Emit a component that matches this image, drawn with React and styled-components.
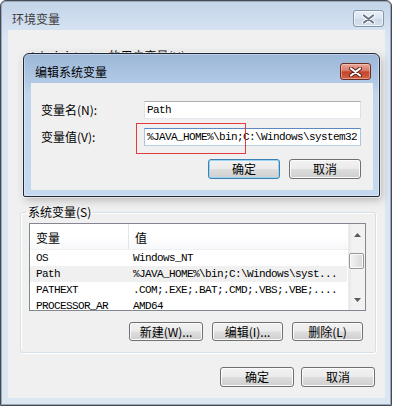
import React from 'react';
import styled, { createGlobalStyle } from 'styled-components';

const UI = `"Noto Sans CJK SC", "Noto Sans", sans-serif`;
const MONO = `"Liberation Mono", "Noto Sans CJK SC", monospace`;

const GlobalStyle = createGlobalStyle`
  html, body { margin: 0; padding: 0; background: #ffffff; }
  body { font-family: ${UI}; font-size: 12px; color: #000; }
  * { box-sizing: border-box; }
`;

const Window = styled.div`
  position: relative;
  width: 392px;
  height: 406px;
  border: 1px solid #434a54;
  border-radius: 6px 6px 0 0;
  box-shadow: inset 0 0 0 1px #9aa8b9;
  background: linear-gradient(180deg, #c3d4e8 0, #d5e2f1 29px, #dbe6f3 40px, #dbe6f3 100%);
  padding: 0 6px 7px 7px;
  display: flex;
  flex-direction: column;
`;

const TitleBar = styled.div`
  height: ${p => p.$h || 29}px;
  flex: none;
  display: flex;
  align-items: center;
  justify-content: space-between;
  padding: 6px ${p => p.$right}px 0 4px;
`;

const Title = styled.span`
  font-size: 12px;
  line-height: 14px;
  color: ${p => (p.$active ? '#000' : '#3c3c3c')};
`;

const CloseButton = styled.div`
  width: 31px;
  height: 17px;
  border-radius: 3px;
  display: flex;
  align-items: center;
  justify-content: center;
  border: 1px solid ${p => (p.$active ? '#6b2e26' : '#8394ab')};
  background: ${p =>
    p.$active
      ? 'linear-gradient(180deg, #e9a899 0%, #d77a66 45%, #c4432d 52%, #cf6446 100%)'
      : 'linear-gradient(180deg, #e8eff7 0%, #d9e4f0 50%, #ccd9e8 52%, #d3dfec 100%)'};
  box-shadow: inset 0 0 0 1px ${p => (p.$active ? 'rgba(255,220,210,0.45)' : 'rgba(255,255,255,0.6)')};
`;

const Close = ({ active }) => (
  <CloseButton $active={active}>
    <svg width="13" height="10" viewBox="0 0 13 10">
      <path d="M2 1.5 L11 8.5 M11 1.5 L2 8.5" stroke={active ? '#5a1d14' : '#ffffff'} strokeWidth="4" strokeLinecap="round" fill="none" />
      <path d="M2 1.5 L11 8.5 M11 1.5 L2 8.5" stroke={active ? '#ffffff' : '#6b7686'} strokeWidth="2.2" strokeLinecap="round" fill="none" />
    </svg>
  </CloseButton>
);

const Client = styled.div`
  flex: 1;
  background: #f0f0f0;
  display: flex;
  flex-direction: column;
`;

const HiddenLegend = styled.div`
  margin: 19px 0 0 21px;
  line-height: 14px;
  font-size: 12px;
`;

const Group = styled.fieldset`
  margin: 142px 9px 0 12px;
  padding: 4px 9px 11px 8px;
  border: 1px solid #d5dfe5;
  border-radius: 3px;
  box-shadow: inset 1px 1px 0 #ffffff, 1px 1px 0 #ffffff;
  min-width: 0;
`;

const Legend = styled.legend`
  padding: 0 2px;
  margin-left: -3px;
  line-height: 14px;
  font-size: 12px;
`;

const ListView = styled.div`
  height: 88px;
  border: 1px solid #828790;
  background: #ffffff;
  display: flex;
  overflow: hidden;
`;

const Table = styled.div`
  flex: 1;
  min-width: 0;
  display: flex;
  flex-direction: column;
`;

const HeaderRow = styled.div`
  height: 26px;
  flex: none;
  display: grid;
  grid-template-columns: 99px 1fr;
  background: linear-gradient(180deg, #ffffff 0%, #ffffff 50%, #f7f8fa 100%);
  border-bottom: 1px solid #eef0f3;
`;

const HeaderCell = styled.div`
  display: flex;
  align-items: center;
  padding: 2px 0 0 6px;
  font-size: 12px;
  border-right: ${p => (p.$divider ? '1px solid #e3e5e8' : 'none')};
`;

const Row = styled.div`
  height: 16px;
  flex: none;
  display: grid;
  grid-template-columns: 99px 1fr;
  background: ${p => (p.$hover ? '#f0f0f0' : 'transparent')};
  margin-right: 1px;
`;

const Cell = styled.div`
  font-family: ${MONO};
  font-size: 11px;
  letter-spacing: -0.6px;
  line-height: 16px;
  white-space: nowrap;
  overflow: hidden;
  padding-left: ${p => p.$pad}px;
`;

const ScrollBar = styled.div`
  width: 17px;
  flex: none;
  display: flex;
  flex-direction: column;
  background: linear-gradient(90deg, #e6e6e6 0, #f2f2f2 3px, #f2f2f2 100%);
  border-left: 1px solid #ececec;
`;

const ArrowBox = styled.div`
  height: ${p => p.$h}px;
  flex: none;
  display: flex;
  align-items: center;
  justify-content: center;
`;

const Track = styled.div`
  flex: 1;
  padding: 7px 1px 0 0;
`;

const Thumb = styled.div`
  height: 16px;
  border: 1px solid #979797;
  border-radius: 2px;
  background: linear-gradient(90deg, #f4f4f4 0%, #e6e6e6 50%, #d8d8d8 100%);
  box-shadow: inset 0 0 0 1px #fafafa;
`;

const Arrow = ({ up }) => (
  <svg width="7" height="4" viewBox="0 0 7 4">
    <path d={up ? 'M0 4 L3.5 0 L7 4 Z' : 'M0 0 L3.5 4 L7 0 Z'} fill="#5a5a5a" />
  </svg>
);

const ButtonRow = styled.div`
  display: flex;
  justify-content: flex-end;
  gap: ${p => p.$gap}px;
  margin-top: ${p => p.$top}px;
  padding-right: ${p => p.$right}px;
`;

const Button = styled.button`
  width: ${p => p.$w}px;
  height: ${p => p.$h}px;
  padding: 0;
  border-radius: 3px;
  border: 1px solid ${p => (p.$focused ? '#3c7fb1' : '#707070')};
  background: linear-gradient(180deg, #f2f2f2 0%, #ebebeb 48%, #dddddd 52%, #cfcfcf 100%);
  box-shadow: inset 0 0 0 1px ${p => (p.$focused ? '#9cd5f4' : '#fbfbfb')};
  font-family: ${UI};
  font-size: 12px;
  line-height: 14px;
  color: #000;
`;

const Dialog = styled.div`
  position: absolute;
  left: 22px;
  top: 52px;
  width: 357px;
  height: 144px;
  border: 1px solid #1f2833;
  border-radius: 6px 6px 2px 2px;
  background: linear-gradient(180deg, #9bb6d7 0, #b3cae6 29px, #c1d6ee 40px, #c4d8ef 100%);
  box-shadow: inset 0 0 0 1px rgba(255, 255, 255, 0.35), 0 0 0 1px rgba(255, 255, 255, 0.5), 2px 3px 8px rgba(0, 0, 0, 0.25);
  padding: 0 6px 6px 7px;
  display: flex;
  flex-direction: column;
`;

const DialogClient = styled.div`
  flex: 1;
  background: #f0f0f0;
  padding: 18px 0 0 10px;
`;

const FieldGrid = styled.div`
  display: grid;
  grid-template-columns: 103px 217px;
  grid-auto-rows: 18px;
  row-gap: 9px;
  align-items: center;
`;

const Label = styled.label`
  font-size: 12px;
  line-height: 14px;
`;

const TextBox = styled.div`
  height: 18px;
  background: #ffffff;
  border: 1px solid;
  border-color: ${p => (p.$focused ? '#5c8ac0 #a9c4e4 #b5cfe7 #a9c4e4' : '#abadb3 #dbdfe6 #e3e9ef #e2e3ea')};
  padding: 0 0 0 2px;
  font-family: ${MONO};
  font-size: 11px;
  letter-spacing: -0.6px;
  line-height: 16px;
  white-space: nowrap;
  overflow: hidden;
`;

const Annotation = styled.div`
  position: absolute;
  left: 135px;
  top: 122px;
  width: 110px;
  height: 31px;
  border: 1px solid #e33b3b;
  pointer-events: none;
`;

const rows = [
  ['OS', 'Windows_NT'],
  ['Path', '%JAVA_HOME%\\bin;C:\\Windows\\syst...'],
  ['PATHEXT', '.COM;.EXE;.BAT;.CMD;.VBS;.VBE;....'],
  ['PROCESSOR_AR', 'AMD64'],
];

export default function App() {
  return (
    <>
      <GlobalStyle />
      <Window>
        <TitleBar $right={1}>
          <Title>环境变量</Title>
          <Close />
        </TitleBar>
        <Client>
          <HiddenLegend>Administrator 的用户变量(U)</HiddenLegend>
          <Group>
            <Legend>系统变量(S)</Legend>
            <ListView>
              <Table>
                <HeaderRow>
                  <HeaderCell $divider>变量</HeaderCell>
                  <HeaderCell>值</HeaderCell>
                </HeaderRow>
                {rows.map(([name, value], i) => (
                  <Row key={name} $hover={i === 1}>
                    <Cell $pad={6}>{name}</Cell>
                    <Cell $pad={4}>{value}</Cell>
                  </Row>
                ))}
              </Table>
              <ScrollBar>
                <ArrowBox $h={22}><Arrow up /></ArrowBox>
                <Track><Thumb /></Track>
                <ArrowBox $h={20}><Arrow /></ArrowBox>
              </ScrollBar>
            </ListView>
            <ButtonRow $gap={9} $top={11} $right={3}>
              <Button $w={74} $h={19}>新建(W)...</Button>
              <Button $w={71} $h={19}>编辑(I)...</Button>
              <Button $w={71} $h={19}>删除(L)</Button>
            </ButtonRow>
          </Group>
          <ButtonRow $gap={7} $top={14} $right={10}>
            <Button $w={74} $h={20}>确定</Button>
            <Button $w={74} $h={20}>取消</Button>
          </ButtonRow>
        </Client>

        <Dialog>
          <TitleBar $right={2}>
            <Title $active>编辑系统变量</Title>
            <Close active />
          </TitleBar>
          <DialogClient>
            <FieldGrid>
              <Label>变量名(N):</Label>
              <TextBox>Path</TextBox>
              <Label>变量值(V):</Label>
              <TextBox $focused>%JAVA_HOME%\bin;C:\Windows\system32</TextBox>
            </FieldGrid>
            <ButtonRow $gap={9} $top={13} $right={12}>
              <Button $w={72} $h={20} $focused>确定</Button>
              <Button $w={72} $h={20}>取消</Button>
            </ButtonRow>
          </DialogClient>
        </Dialog>
        <Annotation />
      </Window>
    </>
  );
}
